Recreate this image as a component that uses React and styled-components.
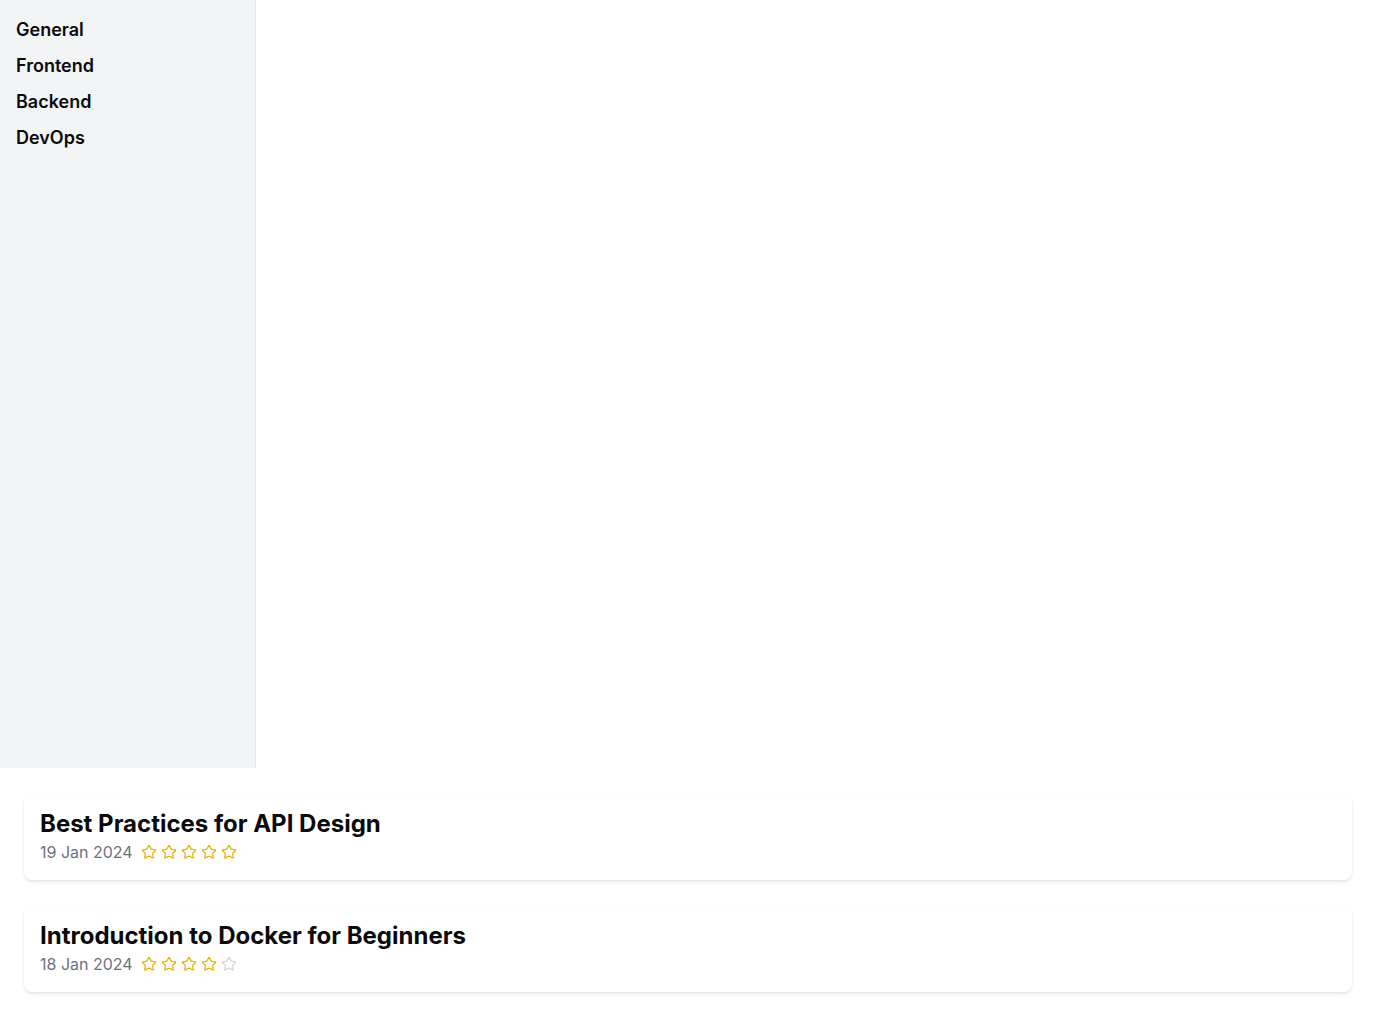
import React from "react";
import styled, { createGlobalStyle } from "styled-components";

const Global = createGlobalStyle`
  html, body { margin: 0; padding: 0; background: #ffffff; }
  body { font-family: Inter, "Noto Sans", sans-serif; color: #111111; }
  * { box-sizing: border-box; }
`;

const Layout = styled.div`
  display: flex;
  height: 768px;
`;

const Sidebar = styled.nav`
  width: 256px;
  flex-shrink: 0;
  background: #f3f4f6;
  border-right: 1px solid #e5e7eb;
  padding: 16px;
  display: flex;
  flex-direction: column;
  gap: 8px;
`;

const NavItem = styled.a`
  font-size: 18px;
  line-height: 28px;
  font-weight: 600;
  color: #0a0a0a;
  text-decoration: none;
  cursor: pointer;
`;

const Main = styled.main`
  flex: 1;
  background: #ffffff;
`;

const List = styled.section`
  padding: 27px 24px 24px;
  display: flex;
  flex-direction: column;
  gap: 27px;
`;

const Card = styled.article`
  background: #ffffff;
  border-radius: 8px;
  padding: 16px;
  box-shadow: 0 2px 4px rgba(0, 0, 0, 0.08), 0 1px 2px rgba(0, 0, 0, 0.05);
`;

const Title = styled.h2`
  margin: 0;
  font-size: 24px;
  line-height: 26px;
  font-weight: 700;
  color: #0a0a0a;
`;

const Meta = styled.div`
  display: flex;
  align-items: center;
  gap: 8px;
  height: 24px;
  margin-top: 3px;
`;

const DateText = styled.span`
  font-size: 16px;
  line-height: 24px;
  color: #6b7280;
`;

const Stars = styled.div`
  display: flex;
  gap: 4px;
  align-items: center;
`;

const StarSvg = styled.svg`
  width: 16px;
  height: 16px;
  display: block;
  color: ${(p) => (p.$on ? "#eab308" : "#d1d5db")};
`;

function Star({ on }) {
  return (
    <StarSvg $on={on} viewBox="0 0 24 24" fill="none" stroke="currentColor" strokeWidth="2" strokeLinecap="round" strokeLinejoin="round">
      <path d="M11.525 2.295a.53.53 0 0 1 .95 0l2.31 4.679a2.123 2.123 0 0 0 1.595 1.16l5.166.756a.53.53 0 0 1 .294.904l-3.736 3.638a2.123 2.123 0 0 0-.611 1.878l.882 5.14a.53.53 0 0 1-.771.56l-4.618-2.428a2.122 2.122 0 0 0-1.973 0L6.396 21.01a.53.53 0 0 1-.77-.56l.881-5.139a2.122 2.122 0 0 0-.611-1.879L2.16 9.795a.53.53 0 0 1 .294-.906l5.165-.755a2.122 2.122 0 0 0 1.597-1.160z" />
    </StarSvg>
  );
}

const posts = [
  { title: "Best Practices for API Design", date: "19 Jan 2024", rating: 5 },
  { title: "Introduction to Docker for Beginners", date: "18 Jan 2024", rating: 4 },
];

export default function App() {
  return (
    <>
      <Global />
      <Layout>
        <Sidebar>
          {["General", "Frontend", "Backend", "DevOps"].map((c) => (
            <NavItem key={c}>{c}</NavItem>
          ))}
        </Sidebar>
        <Main />
      </Layout>
      <List>
        {posts.map((p) => (
          <Card key={p.title}>
            <Title>{p.title}</Title>
            <Meta>
              <DateText>{p.date}</DateText>
              <Stars>
                {[1, 2, 3, 4, 5].map((i) => (
                  <Star key={i} on={i <= p.rating} />
                ))}
              </Stars>
            </Meta>
          </Card>
        ))}
      </List>
    </>
  );
}
